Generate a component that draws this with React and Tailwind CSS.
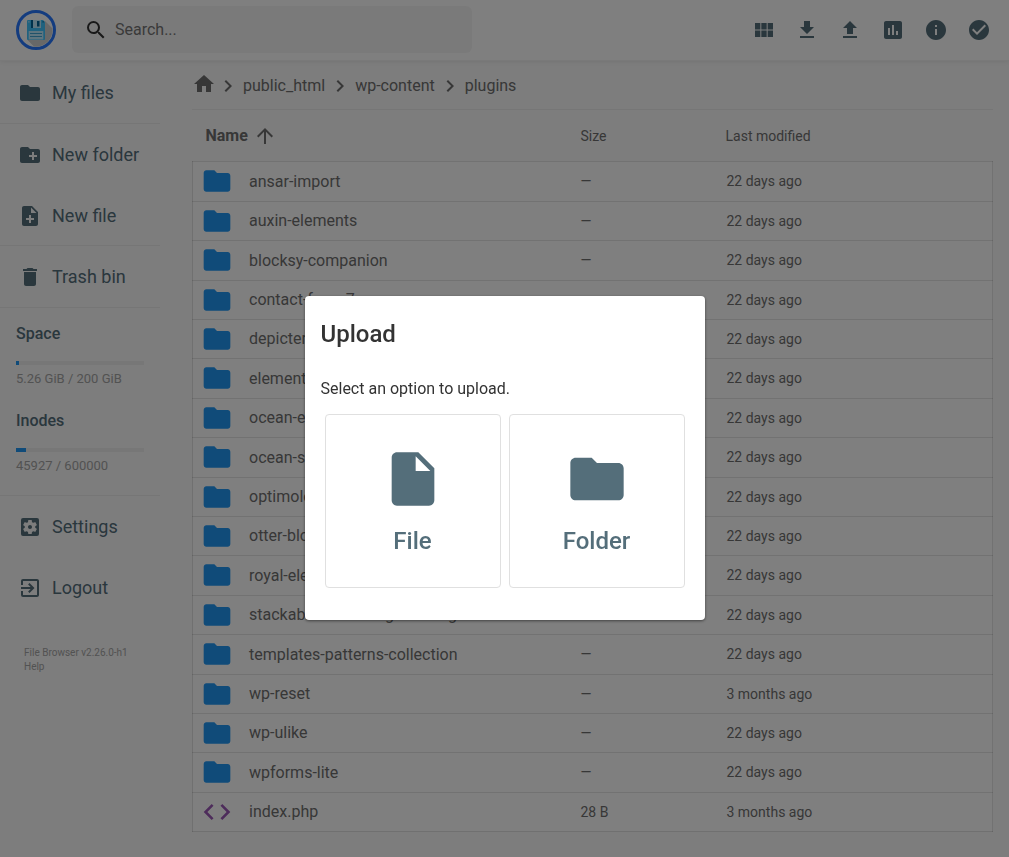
import React from 'react';
import {
    MdArrowUpward,
    MdCheckCircle,
    MdCode,
    MdCreateNewFolder,
    MdDelete,
    MdExitToApp,
    MdFileDownload,
    MdFileUpload,
    MdFolder,
    MdHome,
    MdInfo,
    MdInsertChart,
    MdInsertDriveFile,
    MdKeyboardArrowRight,
    MdNoteAdd,
    MdSearch,
    MdSettingsApplications,
    MdViewModule,
} from 'react-icons/md';

const files = [
    { name: 'ansar-import', modified: '22 days ago' },
    { name: 'auxin-elements', modified: '22 days ago' },
    { name: 'blocksy-companion', modified: '22 days ago' },
    { name: 'contact-form-7', modified: '22 days ago' },
    { name: 'depicter', modified: '22 days ago' },
    { name: 'elementor', modified: '22 days ago' },
    { name: 'ocean-extra', modified: '22 days ago' },
    { name: 'ocean-social-sharing', modified: '22 days ago' },
    { name: 'optimole-wp', modified: '22 days ago' },
    { name: 'otter-blocks', modified: '22 days ago' },
    { name: 'royal-elementor-addons', modified: '22 days ago' },
    { name: 'stackable-ultimate-gutenberg-blocks', modified: '22 days ago' },
    { name: 'templates-patterns-collection', modified: '22 days ago' },
    { name: 'wp-reset', modified: '3 months ago' },
    { name: 'wp-ulike', modified: '22 days ago' },
    { name: 'wpforms-lite', modified: '22 days ago' },
    { name: 'index.php', size: '28 B', modified: '3 months ago' },
];

const actions = [
    { label: 'Switch view', icon: MdViewModule },
    { label: 'Download', icon: MdFileDownload },
    { label: 'Upload', icon: MdFileUpload },
    { label: 'Disk usage', icon: MdInsertChart },
    { label: 'Info', icon: MdInfo },
    { label: 'Select multiple', icon: MdCheckCircle },
];

const crumbs = ['public_html', 'wp-content', 'plugins'];

const Logo = () => (
    <svg viewBox="0 0 40 40" className="h-10 w-10 shrink-0" aria-hidden="true">
        <circle cx="20" cy="20" r="18.5" fill="#fff" stroke="#2979ff" strokeWidth="3" />
        <path d="M29 11l7.500 7.500A16.700 16.700 0 0 1 18 36.600L11.500 30z" fill="#d0d0d0" />
        <path d="M11 11a1 1 0 0 1 1-1h15l2 2v17a1 1 0 0 1-1 1H12a1 1 0 0 1-1-1z" fill="#40c4ff" />
        <path d="M15 10h10v8H15z" fill="#bdeaff" />
        <path d="M15 10h2v8h-2zM21 11h2.500v5.500H21z" fill="#006498" />
        <path d="M12.200 11.200h1.400v1.400h-1.400z" fill="#bdeaff" />
        <path d="M26.500 11.200h1.200v1.400h-1.200z" fill="#006498" />
        <path d="M12.700 21h14.600v8.500H12.700z" fill="#bdeaff" />
        <path d="M14 23.500h12M14 26.500h12" stroke="#40a4d4" strokeWidth="1" />
    </svg>
);

const NavButton = ({ icon: Icon, label }) => (
    <button type="button" className="flex h-[61px] w-full items-center gap-[10px] pl-[18px] text-lg text-[#546e7a]">
        <Icon className="h-6 w-6" />
        {label}
    </button>
);

const Quota = ({ id, title, used, percent }) => (
    <div>
        <h2 id={id} className="text-base leading-5 font-medium text-[#546e7a]">{title}</h2>
        <div
            role="progressbar"
            aria-labelledby={id}
            aria-valuenow={percent}
            aria-valuemin={0}
            aria-valuemax={100}
            className="mt-[17px] h-1 bg-[#eeeeee]"
        >
            <div className="h-full bg-[#2196f3]" style={{ width: `${percent}%` }} />
        </div>
        <p className="mt-[6px] text-[13px] leading-4 text-[#a5a5a5]">{used}</p>
    </div>
);

const Sidebar = () => (
    <nav className="w-40 shrink-0">
        <div className="border-b border-black/5">
            <NavButton icon={MdFolder} label="My files" />
        </div>
        <div className="h-[122px] border-b border-black/5">
            <NavButton icon={MdCreateNewFolder} label="New folder" />
            <NavButton icon={MdNoteAdd} label="New file" />
        </div>
        <div className="border-b border-black/5">
            <NavButton icon={MdDelete} label="Trash bin" />
        </div>
        <div className="flex flex-col gap-6 border-b border-black/5 px-4 pt-4 pb-[21px]">
            <Quota id="space" title="Space" used="5.26 GiB / 200 GiB" percent={2.63} />
            <Quota id="inodes" title="Inodes" used="45927 / 600000" percent={7.65} />
        </div>
        <NavButton icon={MdSettingsApplications} label="Settings" />
        <NavButton icon={MdExitToApp} label="Logout" />
        <div className="mt-7 flex flex-col items-start pl-6 text-[10px] leading-[14px] text-[#a5a5a5]">
            <span>File Browser v2.26.0-h1</span>
            <a href="#help">Help</a>
        </div>
    </nav>
);

const FileTable = () => (
    <table className="w-full table-fixed border-collapse text-left text-sm">
        <thead>
            <tr className="h-[51px]">
                <th scope="col" className="w-[48%] pt-px pl-[13px]">
                    <button type="button" className="flex items-center gap-[5px] text-base font-bold">
                        Name
                        <MdArrowUpward className="h-6 w-6" />
                    </button>
                </th>
                <th scope="col" className="w-[18%] pt-px pl-1 font-normal">Size</th>
                <th scope="col" className="pt-px pl-[5px] font-normal">Last modified</th>
            </tr>
        </thead>
        <tbody>
            {files.map((file) => (
                <tr
                    key={file.name}
                    className="h-[39px] border border-black/10 bg-white nth-[5n+1]:h-10 nth-[5n+3]:h-10"
                >
                    <td className="pl-2">
                        <div className="flex items-center gap-4 text-base whitespace-nowrap">
                            {file.size ? (
                                <MdCode className="h-8 w-8 text-[#9b59b6]" />
                            ) : (
                                <MdFolder className="h-8 w-8 text-[#2196f3]" />
                            )}
                            <span className="pt-px">{file.name}</span>
                        </div>
                    </td>
                    <td className="pl-1">{file.size || '—'}</td>
                    <td className="pl-[6px]">{file.modified}</td>
                </tr>
            ))}
        </tbody>
    </table>
);

const UploadOption = ({ icon: Icon, label }) => (
    <button
        type="button"
        className="flex flex-1 flex-col items-center rounded border border-[#e0e0e0] pt-8 pb-[30px] text-2xl font-medium text-[#546e7a]"
    >
        <Icon className="h-16 w-16" />
        <span className="mt-[14px] leading-8">{label}</span>
    </button>
);

const UploadDialog = () => (
    <div className="fixed inset-0 flex items-start justify-center bg-black/50 pt-[296px]">
        <div
            role="dialog"
            aria-modal="true"
            aria-labelledby="upload-title"
            className="w-[400px] rounded-sm bg-white px-4 pt-5 pb-8 text-[#333333] shadow-[0_1px_3px_rgba(0,0,0,0.5)]"
        >
            <h1 id="upload-title" className="text-2xl leading-9 font-medium">Upload</h1>
            <p className="mt-[25px] leading-6">Select an option to upload.</p>
            <div className="mt-[13px] flex px-1 gap-2">
                <UploadOption icon={MdInsertDriveFile} label="File" />
                <UploadOption icon={MdFolder} label="Folder" />
            </div>
        </div>
    </div>
);

const App = () => (
    <div className="min-h-screen bg-[#fafafa] font-[Roboto,sans-serif] text-[#6f6f6f]">
        <header className="flex items-center justify-between border-b border-black/5 bg-white pt-[6px] pr-[9px] pb-[7px] pl-4 shadow-[0_0_5px_rgba(0,0,0,0.1)]">
            <div className="flex items-center gap-4">
                <Logo />
                <label className="flex h-[47px] w-[400px] items-center gap-[7px] rounded-md bg-[#f5f5f5] px-3">
                    <MdSearch className="h-6 w-6 text-[#333333]" />
                    <input
                        type="text"
                        aria-label="Search"
                        placeholder="Search..."
                        className="min-w-0 flex-1 bg-transparent outline-none placeholder:text-[#757575]"
                    />
                </label>
            </div>
            <div className="flex">
                {actions.map(({ label, icon: Icon }) => (
                    <button key={label} type="button" aria-label={label} className="flex w-[43px] justify-center text-[#546e7a]">
                        <Icon className="h-6 w-6" />
                    </button>
                ))}
            </div>
        </header>
        <div className="flex pt-px">
            <Sidebar />
            <main className="min-w-0 flex-1 pr-4 pb-6 pl-8">
                <div className="flex h-12 items-center border-b border-black/5">
                    <a href="#home" aria-label="Home" className="pb-1">
                        <MdHome className="h-6 w-6" />
                    </a>
                    {crumbs.map((crumb) => (
                        <React.Fragment key={crumb}>
                            <MdKeyboardArrowRight className="h-6 w-6" />
                            <a href={`#${crumb}`} className="px-[3px]">{crumb}</a>
                        </React.Fragment>
                    ))}
                </div>
                <FileTable />
            </main>
        </div>
        <UploadDialog />
    </div>
);

export default App;
